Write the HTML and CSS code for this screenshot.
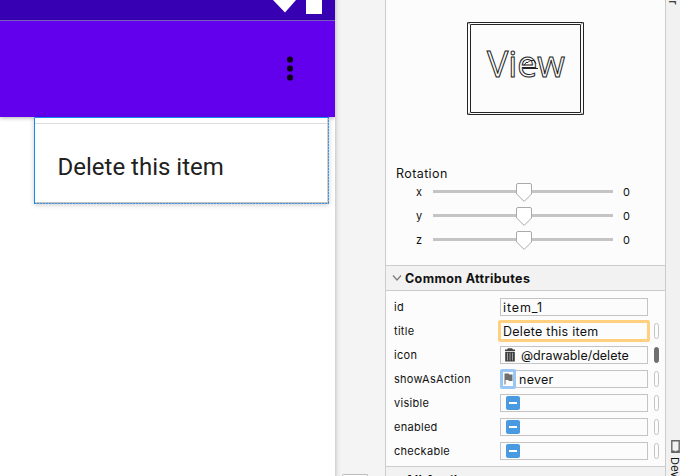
FILE: index.html
```html
<!DOCTYPE html>
<html lang="en">
<head>
<meta charset="utf-8">
<title>Layout editor</title>
<link rel="stylesheet" href="styles.css">
</head>
<body>
<main class="editor">
  <section class="device">
    <div class="statusbar">
      <svg width="60" height="20" viewBox="0 0 60 20"><path d="M8 0H31L20 12.5Z" fill="#fff"/><path d="M41 0H57V14H41Z" fill="#fff"/></svg>
    </div>
    <div class="appbar">
      <svg width="8" height="28" viewBox="0 0 8 28"><g fill="#0c0018"><circle cx="4" cy="4.5" r="3.1"/><circle cx="4" cy="13.5" r="3.1"/><circle cx="4" cy="22.5" r="3.1"/></g></svg>
    </div>
    <div class="popup">
      <svg class="outline" width="295" height="87"><path d="M293.5 0V86" stroke="#d0d0d0"/><path d="M0 85.5H294" stroke="#c4c4c4"/><path d="M294.5 0V87" stroke="#b8b8b8"/><path d="M0 86.5H295" stroke="#b0b0b0"/><path d="M294.5 0V87M0 86.5H295" stroke="#3b93e8" stroke-dasharray="2 1"/><path d="M.5 87V.5H295" fill="none" stroke="#1688f5"/></svg>
      <div class="popup-edge"></div>
      <div class="popup-item"><span>Delete this item</span></div>
    </div>
  </section>
  <div class="gutter"><div class="gutter-button"></div></div>
  <aside class="panel">
    <div class="transform">
      <svg class="view" width="117" height="93" viewBox="0 0 117 93">
        <g fill="none" stroke="#242424"><path d="M.5.5H116.5V92.5H.5Z"/><path d="M3.5 2.5H113.5V90.5H3.5Z"/><path d="M.5.5L3.5 2.5M116.5.5L113.5 2.5M.5 92.5L3.5 90.5M116.5 92.5L113.5 90.5" stroke="#888"/></g>
        <text class="view-text" x="20" y="54.5" textLength="78" lengthAdjust="spacingAndGlyphs">View</text>
        <path d="M56 46.5H71M57 43.5L59 40.5H61L63 38.5H67L69 41.5" fill="none" stroke="#222"/>
      </svg>
      <h3>Rotation</h3>
      <div class="slider"><label>x</label><div class="track"><svg width="16" height="19"><path d="M.5 2Q.5.5 2 .5H14Q15.5.5 15.5 2V11L8.2 18.4L.5 11Z"/></svg></div><output>0</output></div>
      <div class="slider"><label>y</label><div class="track"><svg width="16" height="19"><path d="M.5 2Q.5.5 2 .5H14Q15.5.5 15.5 2V11L8.2 18.4L.5 11Z"/></svg></div><output>0</output></div>
      <div class="slider"><label>z</label><div class="track"><svg width="16" height="19"><path d="M.5 2Q.5.5 2 .5H14Q15.5.5 15.5 2V11L8.2 18.4L.5 11Z"/></svg></div><output>0</output></div>
    </div>
    <h2 class="section"><svg width="10" height="8"><path d="M1 1.5L5 6L9 1.5" fill="none" stroke="#7b7b7b" stroke-width="1.2"/></svg><span>Common Attributes</span></h2>
    <div class="attributes">
      <div class="row"><label>id</label><div class="field"><span class="t-id">item_1</span></div></div>
      <div class="row"><label>title</label><div class="field focused"><span>Delete this item</span></div><i class="pill"></i></div>
      <div class="row"><label>icon</label><div class="field has-icon"><svg width="12" height="14"><path d="M1 3V1.5H3L4 .2H8L9 1.5H11V3Z" fill="#444"/><path d="M1.2 3.8H10.8V13.5H1.2Z" fill="#3c3c3c"/><path d="M3.5 4.8V12.5M6 4.8V12.5M8.5 4.8V12.5" stroke="#aaa" stroke-width=".9"/></svg><span class="t-drawable">@drawable/delete</span></div><i class="pill bound"></i></div>
      <div class="row"><label>showAsAction</label><div class="field has-flag"><b class="flag"><svg width="10" height="12"><path d="M1.5.5H5.5L6.5 1.5H9.5V8H6L5 7H2.5V11.5H1.5Z" fill="#6e6e6e"/></svg></b><span>never</span></div><i class="pill"></i></div>
      <div class="row"><label>visible</label><div class="field"><b class="check"></b></div><i class="pill"></i></div>
      <div class="row"><label>enabled</label><div class="field"><b class="check"></b></div><i class="pill"></i></div>
      <div class="row"><label>checkable</label><div class="field"><b class="check"></b></div><i class="pill"></i></div>
    </div>
    <h2 class="section last"><svg width="10" height="8"><path d="M1 1.5L5 6L9 1.5" fill="none" stroke="#7b7b7b" stroke-width="1.2"/></svg><span>All Attributes</span></h2>
  </aside>
  <nav class="toolstrip">
    <span class="tab first">er</span>
    <span class="tab-device"><svg width="9" height="13"><path d="M.8.8H8.2V12.2H.8Z" fill="none" stroke="#666" stroke-width="1.4"/><path d="M1 10.5H3.5V11.5H5.5V10.5H8V12.5H1Z" fill="#666"/></svg><span class="tab">Dev</span></span>
  </nav>
</main>
</body>
</html>
```
FILE: styles.css
```css
* { box-sizing: border-box; }
body { margin: 0; overflow: hidden; font-family: Inter, "Liberation Sans", sans-serif; color: #111; }
h2, h3 { margin: 0; }
svg { display: block; flex: none; }
.editor { display: grid; grid-template-columns: 335px 50px 281px 14px; width: 680px; height: 476px; overflow: hidden; background: #f3f3f3; }
.device { background: #fff; min-width: 0; }
.statusbar { height: 21px; padding-left: 265px; background: #3700b3; border-bottom: 1px solid #8263cb; }
.appbar { height: 96px; padding: 34px 0 0 286px; background: #6200ee; box-shadow: 0 1px 4px rgba(0, 0, 0, .3); }
.popup { position: relative; width: 295px; height: 87px; margin-left: 34px; background: #fff; box-shadow: 0 1px 5px rgba(0, 0, 0, .2); }
.outline { position: absolute; inset: 0; }
.popup-edge { height: 7px; border-bottom: 1px solid #ddd; }
.popup-item { padding: 28px 0 0 23.5px; font: 24px/30px Roboto, sans-serif; color: #212121; white-space: nowrap; }
.gutter { display: flex; align-items: flex-end; padding-left: 7px; background: linear-gradient(90deg, #d0d0d0, #ececec 3px, #f4f4f4 6px); }
.gutter-button { width: 26px; height: 2px; border: 1px solid #bbb; border-bottom: 0; border-radius: 4px 4px 0 0; background: #fff; }
.panel { min-width: 0; height: 476px; overflow: hidden; border: solid #ccc; border-width: 0 1px; background: #fcfcfc; }
.transform { height: 265px; padding-top: 22px; }
.view { margin-left: 81px; }
.view-text { font: 36px "Open Sans", sans-serif; fill: none; stroke: #222; stroke-width: 1px; }
.transform h3 { margin: 48px 0 0 10px; padding-top: 1px; font-size: 12.5px; font-weight: 400; line-height: 19px; letter-spacing: .4px; }
.slider { display: flex; height: 24px; font-size: 11px; line-height: 19px; }
.slider label { width: 47px; padding-left: 30px; }
.track { display: flex; justify-content: center; align-items: flex-start; width: 180px; background: linear-gradient(#c4c4c4, #c4c4c4) 0 7px / 100% 3px no-repeat; }
.track svg { margin-left: 2px; fill: #fff; stroke: #aaa; }
.slider output { margin-left: 10px; }
.section { display: flex; align-items: center; height: 26px; padding-left: 6px; gap: 3px; border: solid #ccc; border-width: 1px 0; background: #f2f2f2; font-size: 12.5px; font-weight: 700; line-height: 22px; letter-spacing: .37px; white-space: nowrap; }
.section span { padding-top: 2px; }
.section.last { border-bottom: 0; }
.attributes { height: 175px; padding-top: 4px; }
.row { display: flex; align-items: center; height: 24px; padding-left: 8px; }
.row label { width: 106px; font-size: 11px; letter-spacing: .28px; }
.field { display: flex; align-items: center; width: 148px; height: 18px; padding-left: 2px; border: 1px solid #c4c4c4; font-size: 12.5px; line-height: 14px; letter-spacing: .27px; white-space: nowrap; }
.field span { padding-top: 2px; }
.field .t-id { letter-spacing: .9px; }
.field .t-drawable { letter-spacing: 0; }
.field.focused { width: 152px; height: 22px; margin: 0 -2px; padding-left: 2px; border: 3px solid #ffd080; border-radius: 2px; }
.has-icon { padding-left: 3px; gap: 5px; }
.has-flag { padding-left: 0; gap: 3px; }
.flag { display: flex; align-items: center; justify-content: center; width: 16px; height: 20px; margin: 0 0 0 -1px; border: 3px solid #99c6f5; border-radius: 2px; }
.check { display: flex; align-items: center; justify-content: center; width: 14px; height: 14px; margin-left: 3px; border-radius: 2px; background: #4a9ae2; }
.check::after { content: ""; width: 8px; height: 2px; background: #fff; }
.pill { width: 5px; height: 16px; margin-left: 6px; border: 1px solid #c4c4c4; border-radius: 3px; }
.pill.bound { border-color: #6e6e6e; background: #6e6e6e; }
.toolstrip { display: flex; flex-direction: column; justify-content: space-between; height: 476px; overflow: hidden; background: #f1f1f1; }
.tab { writing-mode: vertical-rl; font-size: 11px; line-height: 14px; white-space: nowrap; }
.tab.first { height: 5px; display: flex; justify-content: flex-end; }
.tab-device { display: flex; flex-direction: column; gap: 4px; height: 36px; padding-left: 5px; }
.tab-device .tab { margin-left: -3px; width: 14px; font-size: 11px; letter-spacing: .2px; }
```
